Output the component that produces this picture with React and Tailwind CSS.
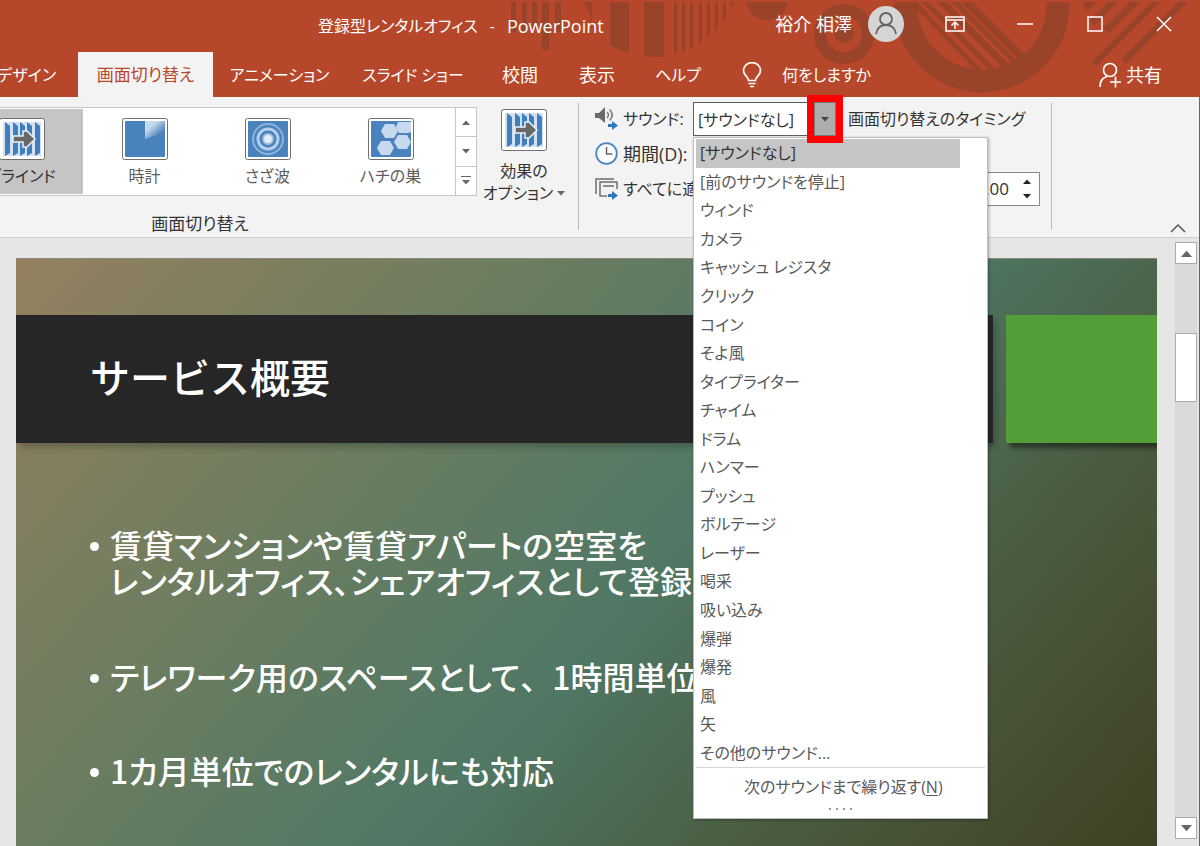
import React from "react";

const sounds = [
  "[サウンドなし]",
  "[前のサウンドを停止]",
  "ウィンド",
  "カメラ",
  "キャッシュ レジスタ",
  "クリック",
  "コイン",
  "そよ風",
  "タイプライター",
  "チャイム",
  "ドラム",
  "ハンマー",
  "プッシュ",
  "ボルテージ",
  "レーザー",
  "喝采",
  "吸い込み",
  "爆弾",
  "爆発",
  "風",
  "矢",
  "その他のサウンド...",
];

const tabs = [
  { label: "アニメーション", style: "w-[133px] text-base" },
  { label: "スライド ショー", style: "w-[134px] text-base" },
  { label: "校閲", style: "w-[80px] text-lg" },
  { label: "表示", style: "w-[74px] text-lg" },
  { label: "ヘルプ", style: "w-[88px] text-base" },
];

function HeaderPattern() {
  return (
    <svg className="absolute top-0 right-0 h-[97px] w-[1200px]" viewBox="0 0 1200 97" fill="#98432a" aria-hidden="true">
      <defs>
        <clipPath id="disc"><circle cx="655" cy="-30" r="87" /></clipPath>
        <clipPath id="ring"><circle cx="983" cy="5" r="68" /></clipPath>
        <clipPath id="below"><rect y="2" width="1200" height="95" /></clipPath>
      </defs>
      <g clipPath="url(#below)">
        <path d="M512 2h5v30h-5zM523 2h5v30h-5zM533 2h5v26h-5zM543 2h7v48h-7zM556 2h6v30h-6z" />
        <path d="M584 2h9v28c0-12-3-20-9-28z" />
        <g clipPath="url(#disc)">
          <path d="M611 0h19v60h-19zM645 0h20v60h-20zM675 0h3v60h-3zM683 0h3v60h-3zM691 0h3v60h-3zM700 0h3v60h-3zM708 0h3v60h-3zM716 0h3v60h-3zM724 0h3v60h-3zM732 0h3v60h-3z" />
        </g>
        <circle cx="768" cy="-1" r="21" />
        <circle cx="845" cy="34" r="24" fill="none" stroke="#98432a" strokeWidth="12" />
        <circle cx="845" cy="33" r="10" />
        <circle cx="983" cy="5" r="76" fill="none" stroke="#98432a" strokeWidth="23" />
        <g clipPath="url(#ring)" stroke="#98432a" fill="none">
          <path d="M903 -10L987 78M912 -12L1004 80" strokeWidth="5" />
          <path d="M925 -16L1017 76" strokeWidth="7" />
          <path d="M938 -16L1026 72" strokeWidth="5" />
          <path d="M950 -16L1040 74" strokeWidth="8" />
        </g>
        <g stroke="#98432a" fill="none">
          <path d="M1098 -4L1086 8" strokeWidth="8" />
          <path d="M1122 -6L1093 23" strokeWidth="7" />
          <path d="M1144 -6L1107 31" strokeWidth="8" />
          <path d="M1163 -4L1095 64" strokeWidth="6" />
          <path d="M1188 -2L1125 61" strokeWidth="7" />
        </g>
      </g>
    </svg>
  );
}

function Thumb({ children }) {
  return (
    <svg width="46" height="42" viewBox="0 0 46 42" aria-hidden="true">
      <rect x="0.5" y="0.5" width="45" height="41" rx="2" fill="#fff" stroke="#6e6e6e" />
      {children}
    </svg>
  );
}

function BlindsIcon() {
  return (
    <Thumb>
      <rect x="4" y="4" width="38" height="34" fill="#d3e1f1" />
      {[6, 14, 21, 28, 36].map((x) => (
        <path key={x} d={`M${x} 4l5 4v27l-5 3z`} fill="#3f7fbe" />
      ))}
      <path d="M14 18h10v-5h4l8 8-8 8h-4v-5h-10z" fill="#686868" stroke="#e8f0f8" strokeWidth="1.5" />
    </Thumb>
  );
}

function ClockThumb() {
  return (
    <Thumb>
      <defs>
        <linearGradient id="sweep" x1="0" y1="0" x2="1" y2="1">
          <stop offset="0.3" stopColor="#c6d9ee" />
          <stop offset="0.75" stopColor="#4a82bd" />
        </linearGradient>
      </defs>
      <rect x="3" y="3" width="40" height="36" rx="1" fill="#4a82bd" />
      <path d="M23 3h20v11l-20 7z" fill="url(#sweep)" />
    </Thumb>
  );
}

function RippleThumb() {
  return (
    <Thumb>
      <rect x="3" y="3" width="40" height="36" rx="1" fill="#4a82bd" />
      <circle cx="23" cy="21" r="15" fill="none" stroke="#8fb4dc" strokeWidth="2" />
      <circle cx="23" cy="21" r="10" fill="none" stroke="#b4cde8" strokeWidth="3" />
      <circle cx="23" cy="21" r="5" fill="#e4eef8" stroke="#9dbfe0" strokeWidth="2" />
    </Thumb>
  );
}

function HoneycombThumb() {
  return (
    <Thumb>
      <rect x="3" y="3" width="40" height="36" rx="1" fill="#4a82bd" />
      <g fill="#c6d9ee">
        <path d="M17 6h9l4 7-4 7h-9l-4-7z" />
        <path d="M13 23h9l4 7-4 7h-9l-4-7z" />
        <path d="M30 17h9l4 7-4 7h-9l-4-7z" />
        <path d="M30 4h13v10l-3 1h-9l-3-6z" />
      </g>
    </Thumb>
  );
}

function Triangle({ up, className = "h-[5px] w-2" }) {
  return (
    <svg viewBox="0 0 8 5" className={className} aria-hidden="true">
      <path d={up ? "M0 5L4 0.5 8 5z" : "M0 0L4 4.5 8 0z"} fill="currentColor" />
    </svg>
  );
}

function Header() {
  return (
    <header className="relative h-[97px] shrink-0 bg-[#b7472a] text-white">
      <HeaderPattern />
      <div className="relative flex h-[52px] items-start justify-between">
        <h1 className="flex h-[52px] items-center pl-[318px] text-base">
          登録型レンタルオフィス<span className="px-3">-</span><span className="text-lg">PowerPoint</span>
        </h1>
        <div className="flex h-12 items-center">
          <span className="text-lg">裕介 相澤</span>
          <svg className="mr-4 ml-4" width="36" height="36" viewBox="0 0 36 36" aria-hidden="true">
            <circle cx="18" cy="18" r="18" fill="#d5d5d5" />
            <g fill="none" stroke="#636363" strokeWidth="1.8">
              <circle cx="18" cy="13" r="6" />
              <path d="M8 28c1-6 5-9 10-9s9 3 10 9" />
            </g>
          </svg>
          <button className="flex h-12 w-[70px] items-center justify-center" aria-label="リボンの表示オプション">
            <svg width="20" height="16" viewBox="0 0 20 16" fill="none" stroke="#fff" strokeWidth="1.5"><path d="M1 1h18v14H1zM1 4h18M10 13V6M6.500 9.500L10 6l3.500 3.500" /></svg>
          </button>
          <button className="flex h-12 w-[70px] items-center justify-center" aria-label="最小化">
            <svg width="16" height="16" viewBox="0 0 16 16"><path d="M0 8h16" stroke="#fff" strokeWidth="1.5" /></svg>
          </button>
          <button className="flex h-12 w-[69px] items-center justify-center" aria-label="最大化">
            <svg width="16" height="16" viewBox="0 0 16 16"><path d="M1 1h14v14H1z" fill="none" stroke="#fff" strokeWidth="1.5" /></svg>
          </button>
          <button className="flex h-12 w-[70px] items-center justify-center" aria-label="閉じる">
            <svg width="16" height="16" viewBox="0 0 16 16"><path d="M1 1l14 14M15 1L1 15" stroke="#fff" strokeWidth="1.5" /></svg>
          </button>
        </div>
      </div>
      <nav className="relative flex h-[45px] items-stretch">
        <button className="flex w-[78px] items-center justify-end overflow-hidden pr-[22px] text-base whitespace-nowrap">デザイン</button>
        <button className="w-[135px] bg-[#f3f3f3] text-[17px] text-[#b7472a]">画面切り替え</button>
        {tabs.map((t) => (
          <button key={t.label} className={t.style}>{t.label}</button>
        ))}
        <button className="flex items-center gap-5 pl-5 text-base">
          <svg width="20" height="26" viewBox="0 0 20 26" fill="none" stroke="#fff" strokeWidth="1.700" aria-hidden="true">
            <path d="M6.500 18.500c0-4-5-5-5-10a8.500 7.800 0 0 1 17 0c0 5-5 6-5 10zM6.500 21.500h7M8 24.500h4" />
          </svg>
          何をしますか
        </button>
        <button className="ml-auto flex items-center gap-1 pr-[37px] text-lg">
          <svg width="24" height="26" viewBox="0 0 24 26" fill="none" stroke="#fff" strokeWidth="1.700" aria-hidden="true">
            <circle cx="12" cy="8" r="6.500" />
            <path d="M2 25c0-6 3-9.500 7-10.500M12 20h11M17.500 14.500v11" />
          </svg>
          共有
        </button>
      </nav>
    </header>
  );
}

function Gallery() {
  const item = "flex w-[123px] shrink-0 flex-col items-center gap-1 pt-[9px] text-base leading-6";
  return (
    <section className="w-[477px] shrink-0 pt-[10px]">
      <div className="flex h-[89px] border-y border-[#c6c6c6] bg-white text-[#5c5c5c]">
        <div className="flex flex-1 justify-end overflow-hidden py-px pr-[3px]">
          <button className={item + " bg-[#c5c5c5] text-[#333]"}><BlindsIcon />ブラインド</button>
          <button className={item}><ClockThumb />時計</button>
          <button className={item}><RippleThumb />さざ波</button>
          <button className={item}><HoneycombThumb />ハチの巣</button>
        </div>
        <div className="flex w-[22px] flex-col divide-y divide-[#c6c6c6] border-x border-[#c6c6c6] text-[#666]">
          <button className="flex flex-1 items-center justify-center" aria-label="上へ"><Triangle up /></button>
          <button className="flex flex-1 items-center justify-center" aria-label="下へ"><Triangle /></button>
          <button className="flex flex-1 flex-col items-center justify-center gap-[3px]" aria-label="その他"><span className="h-px w-[10px] bg-[#666]" /><Triangle /></button>
        </div>
      </div>
      <h2 className="w-[400px] pt-4 text-center text-[17px] leading-6 text-[#333]">画面切り替え</h2>
    </section>
  );
}

function SoundMenu() {
  return (
    <div className="absolute top-[35px] left-0 z-10 flex h-[682px] w-[295px] flex-col border border-[#bdbdbd] bg-white text-base text-[#5a5a5a] shadow-[1px_1px_3px_rgba(0,0,0,0.3)]">
      <ul role="listbox" aria-label="サウンド" className="flex h-[629px] flex-col px-[2px] pt-px">
        {sounds.map((s, i) => (
          <li
            key={s}
            role="option"
            aria-selected={i === 0}
            className={"flex w-[264px] flex-1 items-center pl-1 whitespace-nowrap " + (i === 0 ? "bg-[#c5c5c5] text-[#333]" : "")}
          >
            {s}
          </li>
        ))}
      </ul>
      <button className="mx-[2px] flex flex-1 items-center border-t border-[#d4d4d4] pl-12">
        <span>次のサウンドまで繰り返す(<u className="underline-offset-2">N</u>)</span>
      </button>
      <div className="flex h-3 items-start justify-center gap-[5px] pt-[2px]" aria-hidden="true">
        {[0, 1, 2, 3].map((n) => (
          <span key={n} className="h-[2px] w-[2px] bg-[#8b98a5]" />
        ))}
      </div>
    </div>
  );
}

function BlueArrow({ x, y }) {
  return <path transform={`translate(${x} ${y})`} d="M0 3h4V0l6 4.500L4 9V6H0z" fill="#2f78bd" />;
}

function Timing() {
  const row = "flex h-[34px] items-center";
  return (
    <section className="flex w-[445px] shrink-0 flex-col gap-px pt-[5px] text-base text-[#333]">
      <div className={row}>
        <svg width="24" height="24" viewBox="0 0 24 24" className="mr-1 shrink-0" aria-hidden="true">
          <path d="M0 6h4l6-6v16l-6-5H0z" fill="#6a6a6a" />
          <path d="M12 5c2 2 2 4 0 6M14.500 2.500c3.500 3.500 3.500 7.500 0 11" fill="none" stroke="#7a7a7a" strokeWidth="1.500" />
          <BlueArrow x={13} y={14} />
        </svg>
        <label htmlFor="sound" className="w-[70px] shrink-0 whitespace-nowrap">サウンド:</label>
        <div className="relative flex h-[34px] w-[143px] shrink-0">
          <input id="sound" readOnly value="[サウンドなし]" className="h-[34px] w-[121px] border border-[#5f5f5f] bg-white px-1 outline-none" />
          <div className="relative z-20 w-[22px] outline-[7px] outline-[#ff0000] outline-solid">
            <button className="flex h-[34px] w-[22px] items-center justify-center border border-[#777] bg-[#adadad] text-[#444]" aria-label="サウンドの一覧を開く"><Triangle /></button>
          </div>
          <SoundMenu />
        </div>
        <span className="ml-3 shrink-0 whitespace-nowrap">画面切り替えのタイミング</span>
      </div>
      <div className={row}>
        <svg width="24" height="24" viewBox="0 0 24 24" className="mr-1 shrink-0" fill="none" aria-hidden="true">
          <circle cx="11.500" cy="11.500" r="10.300" stroke="#4a86c2" strokeWidth="1.800" fill="#fff" />
          <path d="M11.500 5v7h6" stroke="#666" strokeWidth="1.500" />
        </svg>
        <span className="text-lg">期間(D):</span>
      </div>
      <div className={row}>
        <button className="flex items-center gap-1 whitespace-nowrap">
          <svg width="24" height="24" viewBox="0 0 24 24" fill="none" aria-hidden="true">
            <path d="M1 17V2h18M12 19H5V5h17v7M8 9h11" stroke="#6d6d6d" strokeWidth="1.500" />
            <BlueArrow x={13} y={14} />
          </svg>
          すべてに適用
        </button>
        <div className="ml-auto flex h-[34px] w-[132px] items-center border border-[#8a8a8a] bg-white pr-2">
          <input aria-label="自動的に切り替え" readOnly value="00:00.00" className="w-full min-w-0 pr-[14px] text-right text-[17px] outline-none" />
          <span className="flex flex-col gap-[10px] text-[#222]"><Triangle up /><Triangle /></span>
        </div>
      </div>
    </section>
  );
}

function Ribbon() {
  const divider = "mt-[6px] h-[127px] w-px shrink-0 bg-[#bcbcbc]";
  return (
    <div className="relative z-10 flex h-[141px] shrink-0 border-b border-[#d0d0d0] bg-[#f3f3f3]">
      <Gallery />
      <button className="flex w-[94px] shrink-0 flex-col items-center justify-start pt-3 text-base leading-[22px] text-[#333]">
        <BlindsIcon />
        <span className="mt-[9px]">効果の</span>
        <span className="flex items-center gap-1 whitespace-nowrap">オプション<Triangle className="h-[5px] w-2 text-[#666]" /></span>
      </button>
      <div className={divider + " ml-[7px]"} />
      <div className="pl-4"><Timing /></div>
      <div className={divider + " ml-[11px]"} />
      <button className="mt-auto mr-[13px] mb-1 ml-auto" aria-label="リボンを折りたたむ">
        <svg width="16" height="10" viewBox="0 0 16 10"><path d="M1 9l7-7 7 7" fill="none" stroke="#555" strokeWidth="1.500" /></svg>
      </button>
    </div>
  );
}

function Slide() {
  return (
    <article className="flex flex-1 flex-col overflow-hidden border-t border-[#8a8a7a] bg-[linear-gradient(132deg,#94805f_0%,#6c7d60_30%,#507865_55%,#4a5c40_76%,#404124_100%)] font-['Noto_Sans_CJK_JP',sans-serif] font-medium text-white">
      <div className="mt-14 flex h-[128px] shrink-0 gap-[13px]">
        <h2 className="flex flex-1 items-center bg-[#262626] pb-[6px] pl-[74px] text-[40px] shadow-[3px_5px_6px_rgba(0,0,0,0.2)] [font-feature-settings:normal]">サービス概要</h2>
        <div className="w-[151px] bg-[#549e39] shadow-[4px_5px_5px_rgba(0,0,0,0.45)]" />
      </div>
      <ul className="flex flex-col pt-[83px] pl-[94px] text-[32px] leading-9 whitespace-nowrap [&>li]:relative [&>li]:before:absolute [&>li]:before:top-4 [&>li]:before:-left-5 [&>li]:before:h-[9px] [&>li]:before:w-[9px] [&>li]:before:rounded-full [&>li]:before:bg-white [&>li]:before:content-['']">
        <li className="mb-[60px]">賃貸マンションや賃貸アパートの空室を<br />レンタルオフィス、シェアオフィスとして登録</li>
        <li className="mb-[58px]">テレワーク用のスペースとして<span className="[font-feature-settings:normal]">、</span>1時間単位</li>
        <li>1カ月単位でのレンタルにも対応</li>
      </ul>
    </article>
  );
}

function ScrollBar() {
  const box = "flex w-[22px] shrink-0 items-center justify-center border border-[#ababab] bg-white text-[#666]";
  return (
    <div className="flex w-[22px] shrink-0 flex-col bg-[#dadada]">
      <button className={box + " h-[22px]"} aria-label="上へスクロール"><Triangle up className="h-[7px] w-[11px]" /></button>
      <div className="flex-1 pt-[69px]"><div className={box + " h-[69px]"} /></div>
      <button className={box + " h-[22px]"} aria-label="下へスクロール"><Triangle className="h-[7px] w-[11px]" /></button>
    </div>
  );
}

export default function App() {
  return (
    <div className="flex h-screen min-w-[1200px] flex-col overflow-hidden border-r border-[#b7472a] bg-[#e6e6e6] font-['Open_Sans','Noto_Sans_CJK_JP',sans-serif] [font-feature-settings:'palt']">
      <Header />
      <Ribbon />
      <main className="flex min-h-0 flex-1 pr-[2px] pl-4">
        <div className="flex flex-1 pt-5 pr-[18px]"><Slide /></div>
        <div className="flex pt-1 pb-[7px]"><ScrollBar /></div>
      </main>
    </div>
  );
}
